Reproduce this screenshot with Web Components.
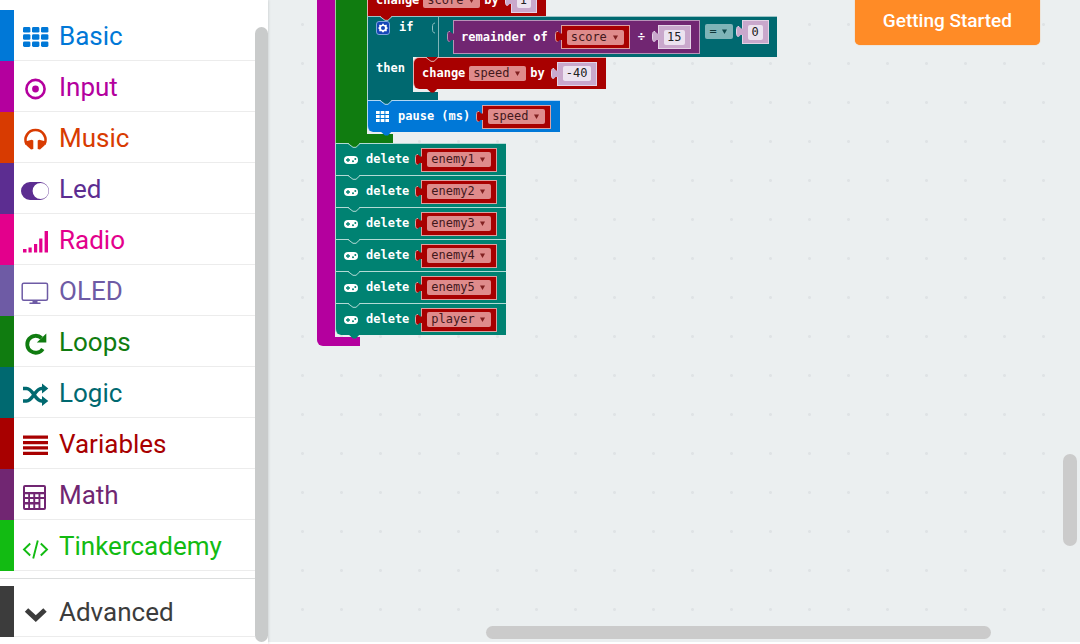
<!DOCTYPE html>
<html lang="en">
<head>
<meta charset="utf-8">
<title>Block editor</title>
<style>
  html, body { margin: 0; height: 100%; }
  body { font-family: Roboto, "Liberation Sans", sans-serif; background: #fff; overflow: hidden; }
</style>
</head>
<body>
<block-editor></block-editor>
<script>
const define = (name, html, setup) => {
  const tpl = document.createElement('template');
  tpl.innerHTML = html;
  customElements.define(name, class extends HTMLElement {
    constructor() {
      super();
      this.attachShadow({ mode: 'open' }).append(tpl.content.cloneNode(true));
    }
    connectedCallback() { if (setup) setup(this, this.shadowRoot); }
  });
};

const ICONS = {
  grid: [0, 1, 2].map(r => [0, 1, 2].map(c => `<rect x="${2 + c * 9}" y="${3 + r * 7.2}" width="7.4" height="5.6" rx="1.4"/>`).join('')).join(''),
  target: '<circle cx="14.5" cy="14" r="9.1" fill="none" stroke="currentColor" stroke-width="2.6"/><circle cx="14.5" cy="14" r="3.4"/>',
  headphones: '<path d="M5.600 18.500A10 10 0 1 1 23.400 18.500" fill="none" stroke="currentColor" stroke-width="2.600"/><path d="M4 15.500 10.800 13.800 12.300 14.500V23L10 23.500 5.500 19.500ZM25 15.500 18.200 13.800 16.700 14.500V23L19 23.500 23.500 19.500Z"/>',
  toggle: '<path fill-rule="evenodd" d="M9 5H19A9 9 0 0 1 19 23H9A9 9 0 0 1 9 5ZM19.600 6A8 8 0 0 0 19.600 22A8 8 0 0 0 19.600 6Z"/>',
  signal: '<path d="M2 21h3.500v3.500H2zM7.500 19.500h3.200v5H7.500zM13 16h3.200v8.500H13zM18.200 10.500h3.200v14h-3.200zM23.600 3h3.400v21.500h-3.400z"/>',
  monitor: '<rect x="1.200" y="4.200" width="25.300" height="17" rx="1.500" fill="none" stroke="currentColor" stroke-width="1.500"/><path d="M11.500 21.500h5v2h3v1.500H8.500v-1.500h3z"/>',
  redo: '<path d="M21.800 19A8.500 8.500 0 1 1 20.500 8" fill="none" stroke="currentColor" stroke-width="3.800"/><path d="M25.300 3.500V12.500H15.800Z"/>',
  shuffle: '<path d="M2 7.500H5.500C12 7.500 14 20 20.500 20H22M2 20H5.500C12 20 14 7.500 20.500 7.500H22" fill="none" stroke="currentColor" stroke-width="3.500"/><path d="M21 2.500 27.300 7.500 21 12.500ZM21 15 27.300 20 21 25Z"/>',
  lines: '<path d="M2 3.500h25v3.300H2zM2 8.900h25v3.300H2zM2 14.300h25v3.300H2zM2 19.700h25v3.300H2z"/>',
  calc: '<path fill-rule="evenodd" d="M4 2H23Q25 2 25 4V25Q25 27 23 27H4Q2 27 2 25V4Q2 2 4 2ZM4 4V9H23V4ZM4 11.200V14H7.200V11.200ZM9 11.200V14H12.300V11.200ZM14.200 11.200V14H17.500V11.200ZM19.400 11.200V14H23V11.200ZM4 16V19H7.200V16ZM9 16V19H12.300V16ZM14.200 16V19H17.500V16ZM4 21.500V25H7.200V21.500ZM9 21.500V25H12.300V21.500ZM14.200 21.500V25H17.500V21.500ZM19.400 16V25H23V16Z"/>',
  code: '<path d="M9.200 9.500 3 15.500 9.200 21.500M19.800 9.500 26 15.500 19.800 21.500M16.800 6.500 12.200 24.500" fill="none" stroke="currentColor" stroke-width="1.900"/>',
  chevron: '<path d="M5.500 10 14.800 18.500 24 10" fill="none" stroke="currentColor" stroke-width="5"/>'
};

define('menu-item', `
<style>
  :host { display: block; }
  button { display: flex; align-items: stretch; width: 100%; height: 51px; margin: 0; padding: 0; border: 0;
    background: none; font: inherit; font-size: 26px; text-align: left; color: var(--c); cursor: pointer; }
  .strip { width: 14px; background: var(--c); }
  .body { flex: 1; display: flex; align-items: center; gap: 10px; padding: 2px 0 0 7px; border-bottom: 1px solid #ececec; }
  svg { width: 28px; height: 28px; margin-top: 4px; fill: currentColor; }
</style>
<button type="button"><span class="strip"></span><span class="body"><svg viewBox="0 0 28 28" aria-hidden="true"></svg><slot></slot></span></button>`,
(el, root) => {
  root.querySelector('svg').innerHTML = ICONS[el.getAttribute('icon')];
  el.style.setProperty('--c', el.getAttribute('color'));
});

define('tool-menu', `
<style>
  :host { display: flex; width: 268px; flex: none; background: #fff; box-shadow: 0 0 3px rgba(0,0,0,.18); z-index: 1; }
  nav { flex: 1; padding-top: 10px; }
  hr { margin: 7px 0; border: 0; border-top: 1px solid #dcdede; }
  .track { width: 13px; display: flex; padding: 27px 0 2px; box-sizing: border-box; }
  .thumb { flex: 1; border-radius: 7px; background: #c9cbcb; }
</style>
<nav aria-label="Toolbox">
  <menu-item icon="grid" color="#0078d7">Basic</menu-item>
  <menu-item icon="target" color="#b4009e">Input</menu-item>
  <menu-item icon="headphones" color="#d83b01">Music</menu-item>
  <menu-item icon="toggle" color="#5c2d91">Led</menu-item>
  <menu-item icon="signal" color="#e3008c">Radio</menu-item>
  <menu-item icon="monitor" color="#6e5ba5">OLED</menu-item>
  <menu-item icon="redo" color="#107c10">Loops</menu-item>
  <menu-item icon="shuffle" color="#006970">Logic</menu-item>
  <menu-item icon="lines" color="#a80000">Variables</menu-item>
  <menu-item icon="calc" color="#712672">Math</menu-item>
  <menu-item icon="code" color="#12bb12">Tinkercademy</menu-item>
  <hr>
  <menu-item icon="chevron" color="#3c3c3c">Advanced</menu-item>
</nav>
<div class="track"><div class="thumb"></div></div>`);

/* One statement: a 32px row with the connector notch on its top edge. */
define('code-block', `
<style>
  :host { display: flex; position: relative; box-sizing: border-box; width: max-content; height: 32px; align-items: center;
    gap: 4px; padding: 0 9px 0 8px; border: 1px solid transparent; border-top-color: rgba(255,255,255,.7);
    border-left-color: rgba(255,255,255,.7); border-right: 0; border-bottom: 0;
    background: var(--c); color: #fff; }
  :host([last]) { border-bottom-left-radius: 6px; }
  :host([first]) { border-top-left-radius: 6px; }
  svg { position: absolute; overflow: visible; width: 12px; height: 5px; left: 12px; }
  .top { top: -1px; }
  .nub { display: none; bottom: -4px; }
  :host([last]) .nub { display: block; }
</style>
<svg class="top" viewBox="0 0 12 5" aria-hidden="true"><path d="M0 0 5 4H8L12 0" fill="var(--prev, var(--c))"/><path d="M0 .5 5 4.300H8L12 .5" fill="none" stroke="#fff" stroke-opacity=".7"/></svg>
<svg class="nub" viewBox="0 0 12 5" aria-hidden="true"><path d="M0 0H12L8 4.500H5Z" fill="var(--c)"/></svg>
<slot></slot>`,
(el) => {
  el.style.setProperty('--c', el.getAttribute('color'));
  if (el.hasAttribute('prev')) el.style.setProperty('--prev', el.getAttribute('prev'));
});

/* A reporter plugged into a statement by its puzzle tab. */
define('value-block', `
<style>
  :host { display: flex; align-items: center; height: var(--h, 24px); margin-left: 2px; }
  svg { width: 7px; height: 16px; margin-right: -1px; overflow: visible; z-index: 1; flex: none; }
  div { display: flex; align-items: center; box-sizing: border-box; height: 100%; gap: 5px; padding: 0 5px;
    border: 1px solid var(--edge); background: var(--c); }
</style>
<svg viewBox="0 0 7 16" aria-hidden="true"><path d="M7 2.500V4.500H5C3 1.500.5 2 .5 6V9C.5 13.500 3 13.500 4.500 11H7Z" fill="var(--c)"/><path d="M3 2.500C1 2 .5 4 .5 6V9C.5 12 1.500 12.500 2.500 12.500" fill="none" stroke="var(--edge)"/></svg>
<div><slot></slot></div>`,
(el) => {
  el.style.setProperty('--c', el.getAttribute('color'));
  el.style.setProperty('--edge', el.getAttribute('edge'));
});

define('pick-field', `
<style>
  :host { display: grid; align-items: center; border-radius: 2px; background: var(--bg, #df8b8b); color: #43181b; font-weight: normal; }
  select { grid-area: 1 / 1; appearance: none; box-sizing: border-box; height: 15px; margin: 0; padding: 0 16px 0 4px; border: 0;
    background: none; font: inherit; line-height: 15px; color: inherit; }
  svg { grid-area: 1 / 1; justify-self: end; width: 5px; height: 5px; margin-right: 6px; fill: #802020; pointer-events: none; }
  :host([op]) { --bg: #7fb4b8; margin-top: 4px; color: #10373a; }
  :host([op]) svg { fill: #10484c; }
</style>
<select><option></option></select><svg viewBox="0 0 5 5" aria-hidden="true"><path d="M0 .5H5L2.500 5Z"/></svg>`,
(el, root) => {
  root.querySelector('option').textContent = el.getAttribute('value');
  root.querySelector('select').setAttribute('aria-label', el.getAttribute('label') || 'variable');
});

define('number-field', `
<style>
  :host { display: flex; font-weight: normal; }
  input { box-sizing: border-box; height: 15px; margin: 0; padding: 0 3px; border: 0; border-radius: 2px;
    background: #ece3f0; font: inherit; line-height: 15px; color: #222; }
</style>
<input type="text" inputmode="numeric" aria-label="number">`,
(el, root) => {
  const input = root.querySelector('input');
  input.value = el.getAttribute('value');
  input.style.width = `calc(${input.value.length}ch + 7px)`;
});

define('var-value', `
<style>:host { display: block; }</style>
<value-block color="#a80000" edge="#dca0a0"><pick-field></pick-field></value-block>`,
(el, root) => {
  const f = root.querySelector('pick-field');
  f.setAttribute('value', el.getAttribute('value'));
  f.shadowRoot.querySelector('option').textContent = el.getAttribute('value');
});

define('num-value', `
<style>:host { display: block; }</style>
<value-block color="#c9a8cc" edge="#e3d3e6"><slot></slot></value-block>`);

/* A bracket that holds a stack: side bar, then a short foot. */
define('bracket-block', `
<style>
  :host { display: grid; grid-template-columns: var(--bar) max-content; width: max-content; }
  .bar { background: var(--c); grid-row: 1 / 3; }
  .foot { grid-column: 2; height: 9px; margin-top: 2px; width: var(--foot); background: var(--c); }
  :host([end]) .bar { border-bottom-left-radius: 6px; }
  :host([inner]) .bar { border-left: 1px solid rgba(255,255,255,.6); }
</style>
<div class="bar"></div><div><slot></slot></div><div class="foot"></div>`,
(el) => {
  for (const [k, a] of [['--c', 'color'], ['--bar', 'bar'], ['--foot', 'foot']]) el.style.setProperty(k, el.getAttribute(a));
});

define('if-block', `
<style>
  :host { display: block; position: relative; width: max-content; color: #fff; --t: #006970; }
  .head { display: flex; align-items: flex-start; box-sizing: border-box; height: 41px; padding-right: 8px; background: var(--t);
    border-top: 1px solid rgba(255,255,255,.6); border-left: 1px solid rgba(255,255,255,.7); }
  .label { display: flex; box-sizing: border-box; width: 70px; padding: 3px 0 0 8px; gap: 9px; align-items: center; }
  .gear { width: 14px; height: 14px; }
  .socket { width: 6px; height: 14px; margin-left: auto; }
  .cond { display: flex; align-items: flex-start; box-sizing: border-box; height: 40px; padding-top: 3px; gap: 5px; padding-left: 6px;
    border-left: 1px solid rgba(255,255,255,.5); }
  .cond > value-block { --h: 34px; }
  .cond > value-block > num-value, .cond > value-block > var-value { --h: 24px; }
  .cond > num-value { margin-left: -4px; }
  .name { margin-left: 2px; }
  .op { margin-left: 3px; }
  .divisor { margin-right: 3px; }
  .then { display: flex; }
  .then span { box-sizing: border-box; width: 46px; height: 35px; padding: 4px 0 0 8px; line-height: 15px; background: var(--t);
    border-left: 1px solid rgba(255,255,255,.7); }
  .foot { width: 71px; height: 8px; box-sizing: border-box; background: var(--t); border-left: 1px solid rgba(255,255,255,.7); }
  .notch { position: absolute; left: 13px; top: 0; width: 12px; height: 5px; overflow: visible; }
</style>
<div class="head">
  <div class="label">
    <svg class="gear" viewBox="0 0 14 14" aria-hidden="true"><rect x=".5" y=".5" width="13" height="13" rx="2.500" fill="#1546b8" stroke="#7fa5dc"/><path d="M7 2.300 8.300 4 10.800 3.800 10.700 6 12 7 10.700 8.300 10.800 10.300 8.300 10.200 7 11.800 5.700 10.200 3.200 10.300 3.300 8.300 2 7 3.300 6 3.200 3.800 5.700 4Z" fill="#fff"/><circle cx="7" cy="7" r="2" fill="#1546b8"/></svg>
    <span>if</span>
    <svg class="socket" viewBox="0 0 6 14" aria-hidden="true"><path d="M3 2C1 2 .5 4 .5 6V8C.5 10 1 12 3 12" fill="none" stroke="#8fc0c3"/></svg>
  </div>
  <div class="cond">
    <value-block color="#712672" edge="#b793b8">
      <span class="name">remainder of</span><var-value value="score"></var-value><span class="op">÷</span><num-value class="divisor"><number-field value="15"></number-field></num-value>
    </value-block>
    <pick-field op value="=" label="comparison"></pick-field>
    <num-value><number-field value="0"></number-field></num-value>
  </div>
</div>
<div class="then"><span>then</span>
  <code-block first last color="#a80000">change <pick-field value="speed"></pick-field> by <num-value><number-field value="-40"></number-field></num-value></code-block>
</div>
<div class="foot"></div>
<svg class="notch" viewBox="0 0 12 5" aria-hidden="true"><path d="M0 0 5 4H8L12 0" fill="#a80000"/><path d="M0 .5 5 4.300H8L12 .5" fill="none" stroke="#fff" stroke-opacity=".7"/></svg>`);

define('delete-block', `
<style>
  :host { display: block; }
  svg { width: 14px; height: 10px; margin-right: 4px; }
</style>
<code-block color="#008272">
  <svg viewBox="0 0 14 10" aria-hidden="true"><rect x="0" y="1" width="14" height="8" rx="4" fill="#fff"/><path d="M2 5H6M4 3V7" stroke="#008272" stroke-width="1.300"/><circle cx="9" cy="6.200" r="1" fill="#008272"/><circle cx="11.300" cy="4" r="1" fill="#008272"/></svg>
  <span>delete</span><var-value></var-value>
</code-block>`,
(el, root) => {
  const v = root.querySelector('var-value'), b = root.querySelector('code-block');
  v.shadowRoot.querySelector('pick-field').shadowRoot.querySelector('option').textContent = el.getAttribute('value');
  v.setAttribute('value', el.getAttribute('value'));
  if (el.hasAttribute('last')) b.setAttribute('last', '');
  if (el.hasAttribute('prev')) b.style.setProperty('--prev', el.getAttribute('prev'));
});

define('work-space', `
<style>
  :host { display: block; position: relative; flex: 1; overflow: hidden; margin-bottom: 2px; background-color: #ebeff0;
    background-image: radial-gradient(circle at center, #dfe3e5 0 1px, transparent 2px); background-size: 39px 39px; background-position: 15px 5px; }
  .script { position: absolute; left: 49px; top: -16px; font: bold 12px/15px "DejaVu Sans Mono", monospace; white-space: nowrap; }
  .th { width: 13px; height: 11px; margin-right: 5px; fill: #fff; }
  .start { position: absolute; right: 40px; top: 0; height: 45px; padding: 0 28px 4px; border: 0; border-radius: 0 0 5px 5px;
    background: #ff8b26; color: #fff; font: 500 19px Roboto, sans-serif; cursor: pointer; box-shadow: 0 0 1px #ff8b26; }
  .bar { position: absolute; border-radius: 7px; background: #cbcbcb; }
  .v { right: 3px; top: 454px; width: 14px; height: 92px; }
  .h { left: 218px; right: 89px; bottom: 3px; height: 13px; }
</style>
<div class="script">
  <bracket-block end color="#b4009e" bar="18px" foot="25px">
    <bracket-block inner color="#107c10" bar="32px" foot="26px">
      <code-block color="#a80000">change <pick-field value="score"></pick-field> by <num-value><number-field value="1"></number-field></num-value></code-block>
      <if-block></if-block>
      <code-block last color="#0078d7" prev="#006970">
        <svg class="th" viewBox="0 0 13 11" aria-hidden="true"><path d="M0 0h3.700v3H0zM4.700 0h3.700v3H4.700zM9.400 0h3.600v3H9.400zM0 4h3.700v3H0zM4.700 4h3.700v3H4.700zM9.400 4h3.600v3H9.400zM0 8h3.700v3H0zM4.700 8h3.700v3H4.700zM9.400 8h3.600v3H9.400z"/></svg>
        <span>pause (ms)</span><var-value value="speed"></var-value>
      </code-block>
    </bracket-block>
    <delete-block value="enemy1" prev="#107c10"></delete-block>
    <delete-block value="enemy2"></delete-block>
    <delete-block value="enemy3"></delete-block>
    <delete-block value="enemy4"></delete-block>
    <delete-block value="enemy5"></delete-block>
    <delete-block value="player" last></delete-block>
  </bracket-block>
</div>
<button class="start" type="button">Getting Started</button>
<div class="bar v"></div>
<div class="bar h"></div>`);

define('block-editor', `
<style>:host { display: flex; height: 100vh; min-height: 640px; }</style>
<tool-menu></tool-menu><work-space></work-space>`);
</script>
</body>
</html>
